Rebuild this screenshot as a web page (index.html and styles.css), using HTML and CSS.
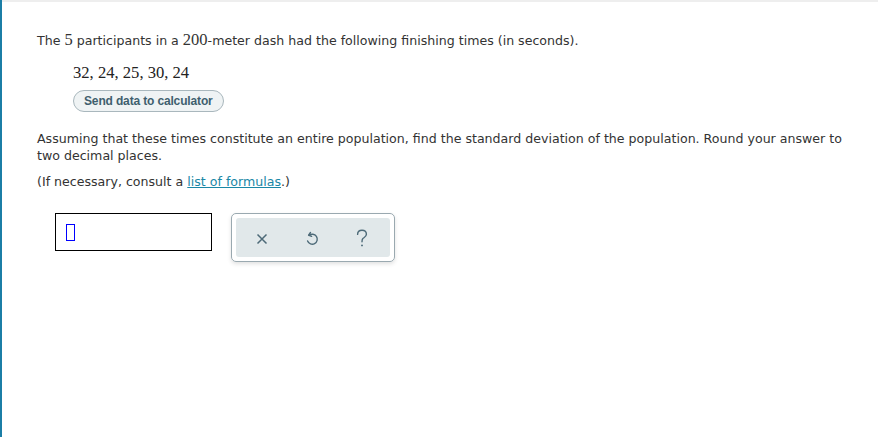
FILE: index.html
```html
<!DOCTYPE html>
<html>
<head>
<meta charset="utf-8">
<link rel="stylesheet" href="styles.css">
</head>
<body>
<div class="page">
  <div class="topbar"></div>
  <div class="content">
    <p class="intro">The <span class="m">5</span> participants in a <span class="m">200</span>-meter dash had the following finishing times (in seconds).</p>
    <div class="data">
      <div class="nums">32, 24, 25, 30, 24</div>
      <button class="send">Send data to calculator</button>
    </div>
    <p class="q">Assuming that these times constitute an entire population, find the standard deviation of the population. Round your answer to two decimal places.</p>
    <p class="note">(If necessary, consult a <a href="#">list of formulas</a>.)</p>
    <div class="answer">
      <div class="inputbox"><span class="cursor"></span></div>
      <div class="tools">
        <div class="tools-inner">
          <svg width="14" height="14" viewBox="0 0 14 14"><path d="M2.5 2.5 L11.5 11.5 M11.5 2.5 L2.5 11.5" stroke="#4d6a78" stroke-width="1.5" fill="none"/></svg>
          <svg width="14" height="16" viewBox="0 0 14 16"><path d="M5.5 1.5 L3.6 4.2 L6.6 5.4" stroke="#4d6a78" stroke-width="1.4" fill="none" stroke-linejoin="round" stroke-linecap="round"/><path d="M4 4.4 A5 5 0 1 1 2.6 10" stroke="#4d6a78" stroke-width="1.4" fill="none" stroke-linecap="round"/></svg>
          <svg width="14" height="19" viewBox="0 0 14 19"><path d="M2.6 5.4 C2.6 2.6 4.7 1.3 7 1.3 C9.5 1.3 11.4 2.9 11.4 5.3 C11.4 7.6 9.4 8.3 8 9.4 C7 10.1 7 11 7 12.8" stroke="#4d6a78" stroke-width="1.4" fill="none" stroke-linecap="round"/><circle cx="7" cy="16.4" r="0.95" fill="#4d6a78"/></svg>
        </div>
      </div>
    </div>
  </div>
</div>
</body>
</html>
```
FILE: styles.css
```css
html, body {
  margin: 0;
  padding: 0;
  background: #fff;
}
.page {
  width: 878px;
  height: 437px;
  box-sizing: border-box;
  border-left: 2px solid #1b7ea6;
  display: flex;
  flex-direction: column;
}
.topbar {
  height: 2px;
  background: #eeeeee;
}
.content {
  padding: 29px 0 0 35px;
  font-family: "DejaVu Sans", Verdana, sans-serif;
  font-size: 12.6px;
  color: #333;
}
p {
  margin: 0;
}
.intro {
  line-height: 18px;
}
.m {
  font-family: "Liberation Serif", "Times New Roman", serif;
  font-size: 16.5px;
}
.data {
  margin: 13px 0 0 36px;
  display: flex;
  flex-direction: column;
  align-items: flex-start;
}
.nums {
  font-family: "Liberation Serif", "Times New Roman", serif;
  font-size: 16.6px;
  line-height: 20px;
  color: #222;
}
.send {
  margin-top: 7px;
  height: 22px;
  padding: 0 10px;
  border: 1px solid #a9b7bd;
  border-radius: 11px;
  background: #eff3f4;
  color: #3f5f6e;
  font-family: "Liberation Sans", Arial, sans-serif;
  font-weight: bold;
  font-size: 12px;
  letter-spacing: -0.15px;
}
.q {
  margin-top: 18px;
  line-height: 17px;
  width: 815px;
}
.note {
  margin-top: 9px;
  line-height: 17px;
}
.note a {
  color: #1a87a6;
}
.answer {
  margin: 23px 0 0 18px;
  display: flex;
  gap: 19px;
  align-items: flex-start;
}
.inputbox {
  width: 145px;
  height: 36px;
  border: 1px solid #000;
  display: flex;
  align-items: center;
  padding-left: 10px;
}
.cursor {
  width: 7px;
  height: 15px;
  border: 1px solid #0000ff;
}
.tools {
  width: 154px;
  height: 39px;
  padding: 4px;
  border: 1px solid #9aa9b0;
  border-radius: 5px;
  box-shadow: 0 2px 4px rgba(0, 0, 0, 0.12);
}
.tools-inner {
  height: 100%;
  background: #e1e8ea;
  border-radius: 3px;
  display: flex;
  align-items: center;
  justify-content: space-between;
  padding: 2px 21px 0 19px;
  box-sizing: border-box;
}
```
